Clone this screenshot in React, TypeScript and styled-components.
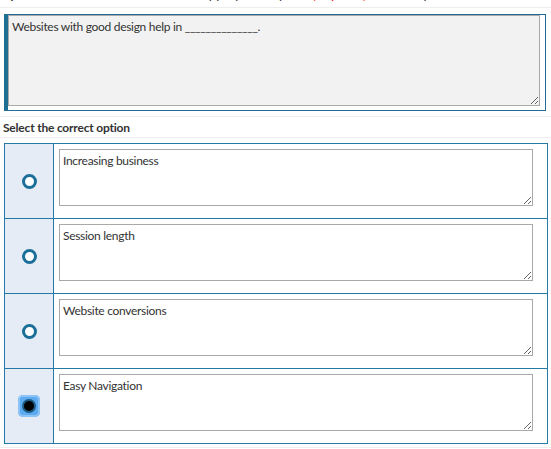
import styled, { createGlobalStyle } from "styled-components";

const GlobalStyle = createGlobalStyle`
  body {
    margin: 0;
    background: #ffffff;
    font-family: Lato, "Open Sans", "Liberation Sans", sans-serif;
    color: #333333;
  }
`;

const TopClip = styled.div`
  height: 7px;
  overflow: hidden;
  border-bottom: 1px solid #eeeeee;
`;

// previous question line, scrolled so only its descenders peek in
const TopLine = styled.div`
  margin-top: -14px;
  padding-left: 3px;
  font-size: 13px;
  line-height: 16px;
  color: #333333;
  white-space: nowrap;

  .req {
    color: #ff0000;
  }
`;

const QuestionBox = styled.div`
  margin: 6px 5px 0 4px;
  border: 1px solid #1f6f93;
  border-left: 4px solid #1f6f93;
  padding: 0 5px 4px 0;
`;

const Field = styled.textarea<{ $height: number; $shade?: boolean }>`
  display: block;
  box-sizing: border-box;
  width: 100%;
  height: ${({ $height }) => $height}px;
  margin: 0;
  padding: 3px 3px;
  border: 1px solid #a9a9a9;
  border-radius: 0;
  background: ${({ $shade }) => ($shade ? "#f2f2f2" : "#ffffff")};
  font-family: Lato, "Open Sans", "Liberation Sans", sans-serif;
  font-size: 12px;
  letter-spacing: -0.3px;
  line-height: 16px;
  color: #333333;
  resize: vertical;
  outline: none;
`;

const SectionLabel = styled.div`
  margin-top: 5px;
  border-top: 1px solid #eeeeee;
  border-bottom: 1px solid #eeeeee;
  height: 20px;
  padding-left: 3px;
  display: flex;
  align-items: center;
  font-size: 12px;
  font-weight: 700;
  letter-spacing: -0.2px;
  color: #333333;
`;

const OptionTable = styled.div`
  margin: 5px 3px 0 4px;
  border: 1px solid #2479a6;
`;

const OptionRow = styled.div`
  display: grid;
  grid-template-columns: 49px 1fr;
  height: 74px;
  border-top: 1px solid #2479a6;

  &:first-child {
    border-top: none;
  }
`;

const RadioCell = styled.div`
  background: #e5ecf6;
  border-right: 1px solid #2479a6;
  display: flex;
  align-items: center;
  justify-content: center;
`;

const TextCell = styled.div`
  padding: 5px 14px 0 5px;
`;

const RadioRing = styled.div<{ $checked: boolean }>`
  box-sizing: border-box;
  width: ${({ $checked }) => ($checked ? 22 : 15)}px;
  height: ${({ $checked }) => ($checked ? 22 : 15)}px;
  border-radius: ${({ $checked }) => ($checked ? "5px" : "50%")};
  background: ${({ $checked }) => ($checked ? "#5eaaf0" : "transparent")};
  box-shadow: ${({ $checked }) => ($checked ? "inset 0 0 0 2px #8cc4f6" : "none")};
  display: flex;
  align-items: center;
  justify-content: center;
`;

const RadioDot = styled.div<{ $checked: boolean }>`
  box-sizing: border-box;
  width: ${({ $checked }) => ($checked ? 14 : 15)}px;
  height: ${({ $checked }) => ($checked ? 14 : 15)}px;
  border-radius: 50%;
  border: ${({ $checked }) => ($checked ? "2px solid #1b5d86" : "3px solid #1b6f98")};
  background: ${({ $checked }) => ($checked ? "#000000" : "#ffffff")};
`;

const BottomRule = styled.div`
  margin-top: 3px;
  border-top: 1px solid #eeeeee;
`;

const options = [
  { text: "Increasing business", checked: false },
  { text: "Session length", checked: false },
  { text: "Website conversions", checked: false },
  { text: "Easy Navigation", checked: true },
];

export default function App() {
  return (
    <>
      <GlobalStyle />
      <TopClip>
        <TopLine>
          Question: Fill in the blank with the appropriate option{" "}
          <span className="req">(required)</span> and then proceed
        </TopLine>
      </TopClip>
      <QuestionBox>
        <Field
          $height={91}
          $shade
          readOnly
          defaultValue="Websites with good design help in ______________."
        />
      </QuestionBox>
      <SectionLabel>Select the correct option</SectionLabel>
      <OptionTable>
        {options.map((o) => (
          <OptionRow key={o.text}>
            <RadioCell>
              <RadioRing $checked={o.checked}>
                <RadioDot $checked={o.checked} />
              </RadioRing>
            </RadioCell>
            <TextCell>
              <Field $height={57} readOnly defaultValue={o.text} />
            </TextCell>
          </OptionRow>
        ))}
      </OptionTable>
      <BottomRule />
    </>
  );
}
